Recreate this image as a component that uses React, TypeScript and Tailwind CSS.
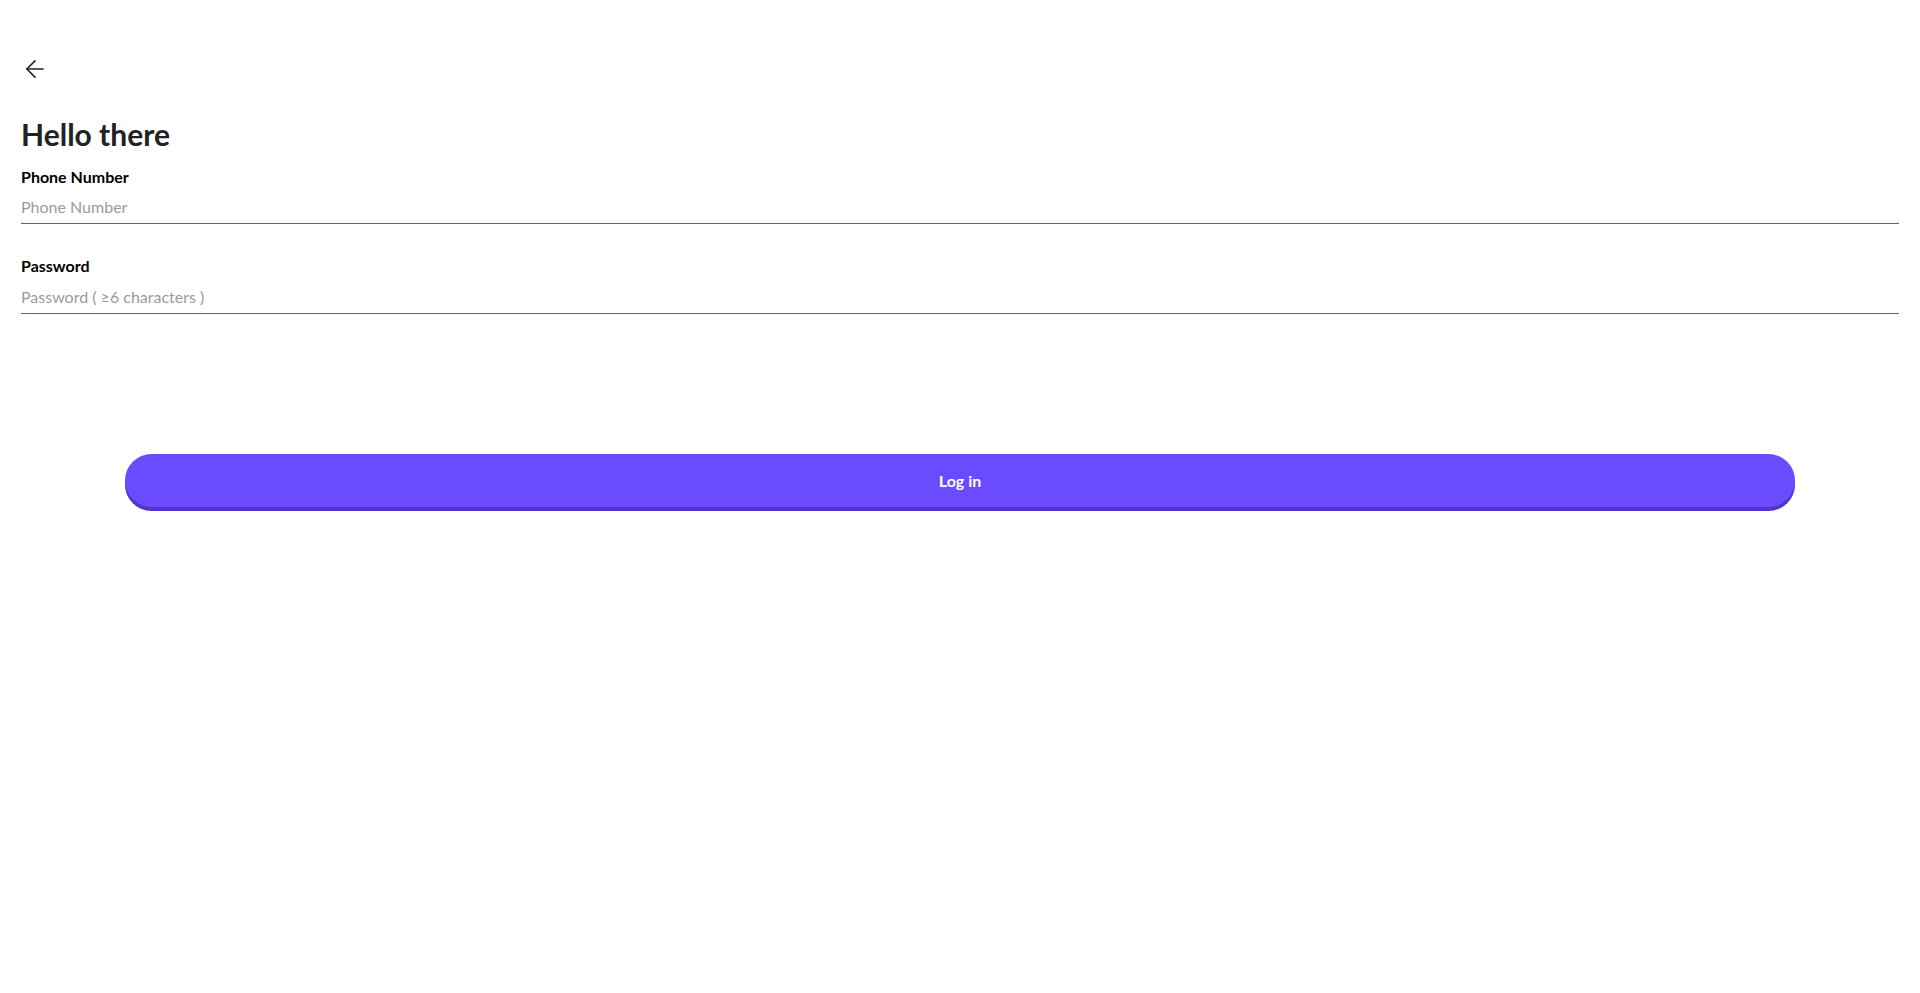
import { ArrowLeft } from 'lucide-react';

export default function App() {
  return (
    <div className="min-h-screen bg-white px-[21px] pt-[55px] font-['Lato','Open_Sans',sans-serif] text-[#1f1f1f]">
      {/* Назад */}
      <button className="flex h-[28px] w-[28px] items-center justify-start text-[#222]">
        <ArrowLeft className="h-[28px] w-[28px]" strokeWidth={1.4} />
      </button>

      <h1 className="mt-[31px] text-[30px] font-bold leading-[40px] text-[#222]">Hello there</h1>

      {/* Телефон */}
      <div className="mt-[11px] flex flex-col">
        <label className="text-[16px] font-bold leading-[24px] text-black">Phone Number</label>
        <input
          className="mt-[6px] h-[29px] border-b border-[#6a52c2] pb-[6px] text-[16px] leading-[20px] outline-none placeholder:text-[#9b9b9b]"
          placeholder="Phone Number"
        />
      </div>

      {/* Пароль */}
      <div className="mt-[30px] flex flex-col">
        <label className="text-[16px] font-bold leading-[24px] text-black">Password</label>
        <input
          type="password"
          className="mt-[7px] h-[29px] border-b border-[#6a52c2] pb-[6px] text-[16px] leading-[20px] outline-none placeholder:text-[#9b9b9b]"
          placeholder="Password ( ≥6 characters )"
        />
      </div>

      <div className="mt-[140px] flex justify-center">
        <button className="h-[53px] w-[1670px] rounded-full bg-[#6a4bff] text-[16px] font-bold text-white shadow-[0_4px_0_#5233d1]">
          Log in
        </button>
      </div>
    </div>
  );
}
